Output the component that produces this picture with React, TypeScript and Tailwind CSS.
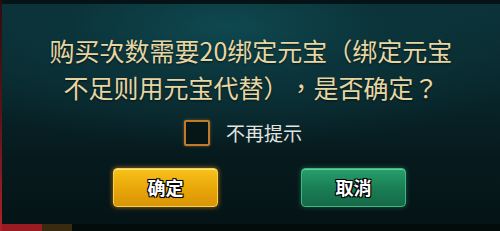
export default function App() {
  const outline =
    "[text-shadow:1px_1px_0_#000,-1px_-1px_0_#000,1px_-1px_0_#000,-1px_1px_0_#000,0_0_2px_#000]";

  return (
    <div className="flex h-[231px] w-[500px] overflow-hidden bg-[#050d0e] font-['Noto_Sans_CJK_TC','Noto_Sans_CJK_SC','Noto_Sans',sans-serif] [text-spacing-trim:space-all]">
      {/* left red edge */}
      <div className="w-[2px] bg-gradient-to-b from-[#2a0d10] via-[#5a1418] to-[#b0222a]" />

      <div className="flex flex-1 flex-col">
        <div className="flex flex-1 flex-col border-t-[4px] border-[#041416] bg-[radial-gradient(ellipse_70%_55%_at_45%_10%,#0f4850_0%,#0b343a_45%,transparent_100%),linear-gradient(to_bottom,#0b3238_0%,#08252a_40%,#061a1d_70%,#051416_100%)]">
          {/* message */}
          <div className="pt-[28px] text-center text-[25px] leading-[37px] text-[#e7d6a2] [text-shadow:0_1px_2px_rgba(0,0,0,0.6)]">
            <p>购买次数需要20绑定元宝（绑定元宝</p>
            <p>不足则用元宝代替），是否确定？</p>
          </div>

          {/* don't remind again */}
          <div className="mt-[14px] flex items-center justify-center gap-[16px] pr-[16px]">
            <div className="h-[26px] w-[26px] rounded-[2px] border-2 border-[#c07a2c] bg-[#061516] shadow-[0_0_3px_rgba(220,140,50,0.5)]" />
            <span className="text-[19px] leading-[26px] text-[#e4e4e0]">不再提示</span>
          </div>

          {/* buttons */}
          <div className="mt-[22px] flex justify-center gap-[83px] pl-[17px]">
            <button className="flex h-[39px] w-[105px] items-center justify-center rounded-[4px] border border-[#f6d24a] bg-gradient-to-b from-[#f7c21a] via-[#eaa80a] to-[#d99406] shadow-[0_0_5px_rgba(240,150,30,0.7),inset_0_1px_0_rgba(255,240,160,0.8)]">
              <span className={`text-[18px] font-bold text-white ${outline}`}>确定</span>
            </button>
            <button className="flex h-[39px] w-[105px] items-center justify-center rounded-[4px] border border-[#3db883] bg-gradient-to-b from-[#27a06c] via-[#1a7f55] to-[#156a47] shadow-[0_0_5px_rgba(50,180,120,0.45),inset_0_1px_0_rgba(140,240,190,0.6)]">
              <span className={`text-[18px] font-bold text-white ${outline}`}>取消</span>
            </button>
          </div>
          <div className="flex-1" />
        </div>

        {/* bottom edge */}
        <div className="flex h-[7px] bg-[#040b0b]">
          <div className="w-[40px] bg-[#9a1c22]" />
          <div className="w-[30px] bg-[#3a2a10]" />
          <div className="flex-1" />
        </div>
      </div>
    </div>
  );
}
